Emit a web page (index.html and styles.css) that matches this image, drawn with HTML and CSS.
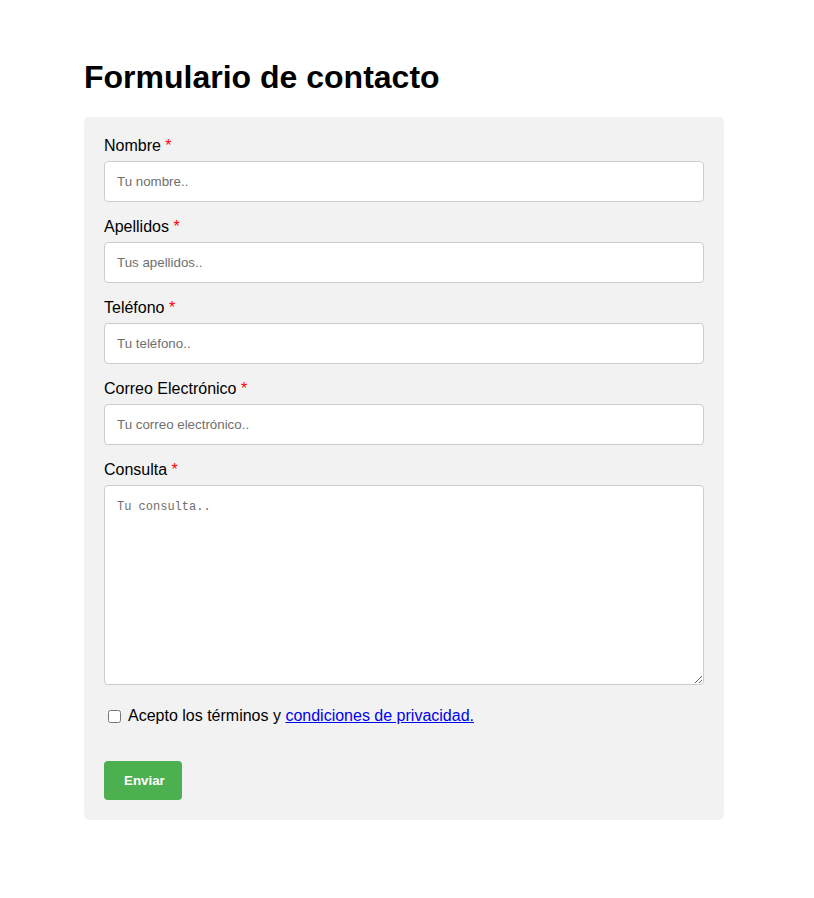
FILE: index.html
```html
<!DOCTYPE html>
<html lang="es">
<head>
<meta charset="utf-8">
<title>Formulario de contacto</title>
<link rel="stylesheet" href="styles.css">
</head>
<body>
<div class="page">
  <h1 class="title">Formulario de contacto</h1>
  <form class="card">
    <label class="field-label" for="nombre">Nombre <span class="req">*</span></label>
    <input class="field" id="nombre" type="text" placeholder="Tu nombre..">
    <label class="field-label" for="apellidos">Apellidos <span class="req">*</span></label>
    <input class="field" id="apellidos" type="text" placeholder="Tus apellidos..">
    <label class="field-label" for="telefono">Teléfono <span class="req">*</span></label>
    <input class="field" id="telefono" type="text" placeholder="Tu teléfono..">
    <label class="field-label" for="correo">Correo Electrónico <span class="req">*</span></label>
    <input class="field" id="correo" type="text" placeholder="Tu correo electrónico..">
    <label class="field-label" for="consulta">Consulta <span class="req">*</span></label>
    <textarea class="field area" id="consulta" placeholder="Tu consulta.."></textarea>
    <div class="terms">
      <input class="check" type="checkbox" id="terms">
      <label for="terms">Acepto los términos y <a class="link" href="#">condiciones de privacidad.</a></label>
    </div>
    <button class="submit" type="button">Enviar</button>
  </form>
</div>
</body>
</html>
```
FILE: styles.css
```css
html, body {
  margin: 0;
  padding: 0;
  background: #ffffff;
}
body {
  font-family: "Liberation Sans", Arial, sans-serif;
  color: #000;
}
.page {
  padding: 59px 0 0 84px;
  width: 640px;
}
.title {
  font-size: 32px;
  font-weight: bold;
  line-height: 37px;
  margin: 0 0 21px 0;
}
.card {
  background: #f2f2f2;
  border-radius: 5px;
  padding: 20px;
}
.field-label {
  display: block;
  font-size: 16px;
  line-height: 18px;
}
.req {
  color: #ff0000;
}
.field {
  display: block;
  box-sizing: border-box;
  width: 100%;
  height: 41px;
  margin: 6px 0 16px;
  padding: 12px;
  border: 1px solid #ccc;
  border-radius: 4px;
  background: #fff;
  font-family: "Liberation Sans", Arial, sans-serif;
  font-size: 13.33px;
}
.field::placeholder {
  color: #6f6f6f;
}
.area {
  height: 200px;
  resize: vertical;
  font-family: "Liberation Mono", monospace;
  font-size: 12px;
  padding: 14px 12px 12px;
}
.terms {
  padding-top: 6px;
  font-size: 16px;
  line-height: 18px;
  display: flex;
  align-items: center;
}
.check {
  width: 13px;
  height: 13px;
  margin: 0 7px 0 4px;
}
.link {
  color: #0000ee;
  text-decoration: underline;
}
.submit {
  display: block;
  margin-top: 36px;
  background: #4caf50;
  color: #fff;
  border: none;
  border-radius: 4px;
  padding: 0 20px;
  height: 39px;
  width: 78px;
  font-family: "Liberation Sans", Arial, sans-serif;
  font-size: 13.33px;
  font-weight: bold;
}
```
